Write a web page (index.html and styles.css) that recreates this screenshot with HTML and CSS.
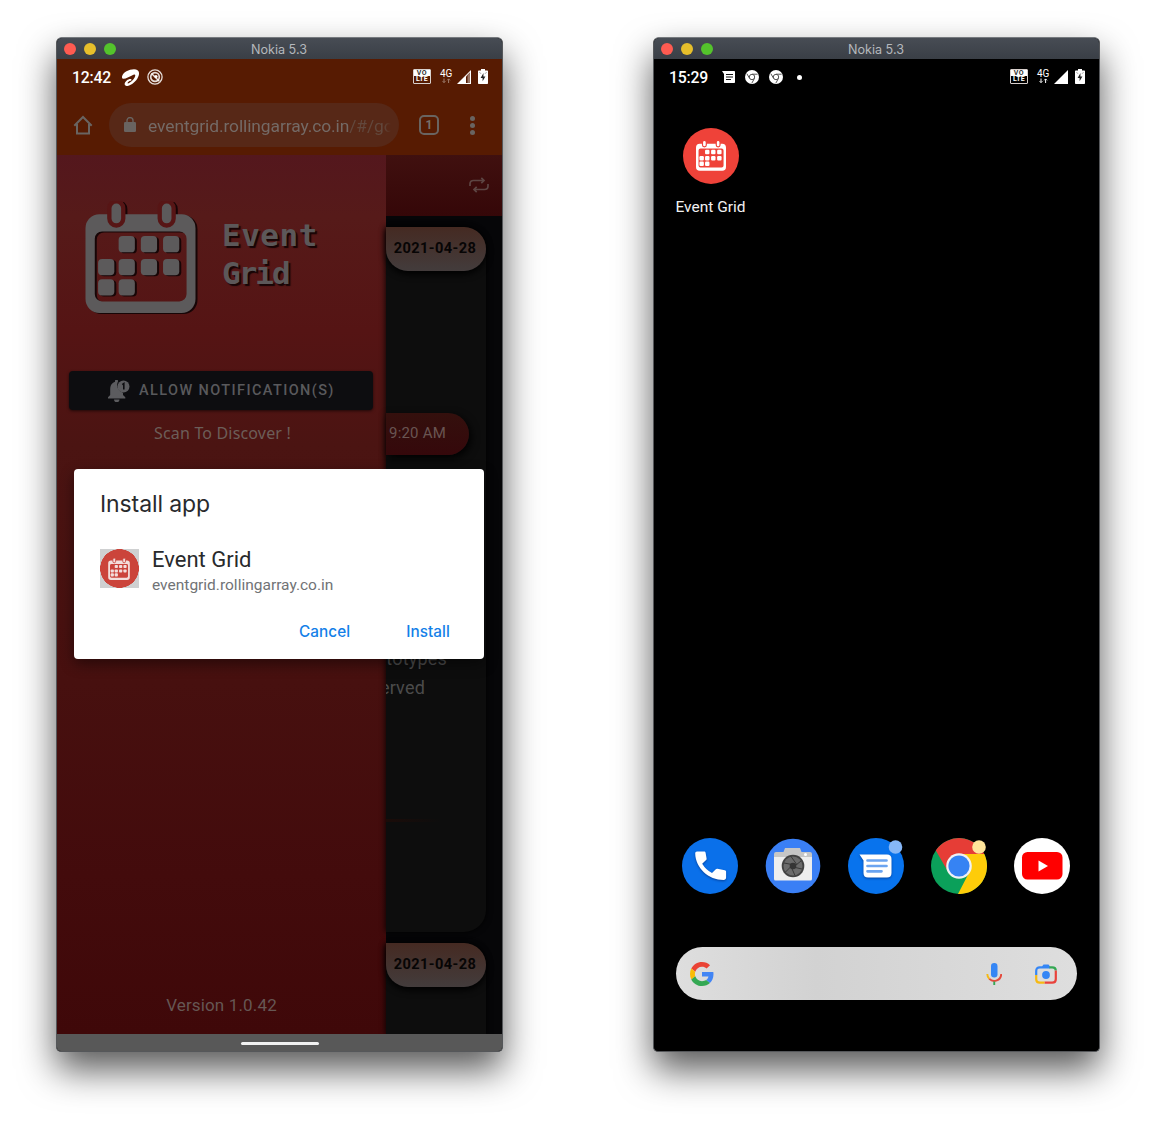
FILE: index.html
```html
<!DOCTYPE html>
<html lang="en">
<head>
<meta charset="utf-8">
<title>Event Grid on Nokia 5.3</title>
<link rel="stylesheet" href="styles.css">
</head>
<body>
<svg class="defs" width="0" height="0">
  <symbol id="calendar" viewBox="0 0 332 338">
    <path class="cal-fill" fill-rule="evenodd" d="M42 40H290A42 42 0 0 1 332 82V296A42 42 0 0 1 290 338H42A42 42 0 0 1 0 296V82A42 42 0 0 1 42 40ZM50 92A22 22 0 0 0 28 114V281A22 22 0 0 0 50 303H283A22 22 0 0 0 305 281V114A22 22 0 0 0 283 92Z"/>
    <g class="cal-ring"><rect x="72" y="1" width="42" height="73" rx="21"/><rect x="224" y="1" width="42" height="73" rx="21"/></g>
    <g class="cal-fill">
      <rect x="100" y="106" width="49" height="49" rx="12"/><rect x="167" y="106" width="49" height="49" rx="12"/><rect x="234" y="106" width="49" height="49" rx="12"/>
      <rect x="38" y="175" width="49" height="49" rx="12"/><rect x="100" y="175" width="49" height="49" rx="12"/><rect x="167" y="175" width="49" height="49" rx="12"/><rect x="234" y="175" width="49" height="49" rx="12"/>
      <rect x="38" y="236" width="49" height="49" rx="12"/><rect x="100" y="236" width="49" height="49" rx="12"/>
    </g>
  </symbol>
  <symbol id="arrows" viewBox="0 0 12 6">
    <path d="M4 .5v4M2.6 3.200 4 4.600l1.400-1.400M8.600 5V1M7.200 2.300l1.400-1.400L10 2.300" fill="none" stroke="currentColor"/>
  </symbol>
  <symbol id="battery" viewBox="0 0 10 15">
    <path d="M3 0h4v1.500h2.300c.4 0 .7.3.7.7v12c0 .5-.3.8-.7.8H.7c-.4 0-.7-.3-.7-.8v-12c0-.4.3-.7.7-.7H3Z" fill="#fff"/>
    <path d="M5.500 4 2.600 9h2v3.200L7.400 7.400h-2Z" fill="#222"/><path d="M1.500 3.200 3 4.800M8.500 3.200 7 4.800" stroke="#777" stroke-width=".7"/>
  </symbol>
  <symbol id="chrome-mono" viewBox="0 0 14 14">
    <circle cx="7" cy="7" r="7" fill="#fff"/><circle cx="7" cy="7" r="2.700" fill="none" stroke="#555" stroke-width="1"/>
    <path d="M7 4.200h5.600M4.600 8.400 1.800 3.600M9.500 8.300 6.800 13.200" stroke="#555" stroke-width="1"/>
  </symbol>
</svg>

<main class="desk">
  <section class="window">
    <header class="titlebar"><span class="light red"></span><span class="light amber"></span><span class="light green"></span><span class="title">Nokia 5.3</span></header>
    <div class="browser">
      <div class="statusbar">
        <span class="clock">12:42</span>
        <svg class="airtel" viewBox="0 0 17 17"><path d="M0 7.500C1 3.200 7 .3 12 .3c4.200 0 5.800 2.600 4.700 6.200-1.200 4.300-5.500 8.400-9.500 10.100-2.600 1-5 .2-4.500-2.100.5-2.400 3.400-4.800 5.900-4.600 1.300.1 1.100 1.700 0 1.900-1.700.3-2.800 1.300-3 2.200-.1.700.8.500 1.900-.2 3-1.700 5.200-4.500 5.700-6.700.4-2.100-1.200-1.700-3.200-.6C7.400 7.900 4 9.700 1.600 9.700.3 9.700-.2 8.700 0 7.500Z" fill="#fff"/></svg>
        <svg class="dnd" viewBox="0 0 16 16"><g fill="none" stroke="#fff" stroke-opacity=".85"><circle cx="8" cy="8" r="7.100" stroke-width="1.300"/><circle cx="8" cy="8" r="4.300" stroke-width="1.700"/><path d="m4.500 4.500 7.800 7.800" stroke-width="1.500"/></g><circle cx="9" cy="7.500" r="1.600" fill="#fff"/></svg>
        <span class="grow"></span>
        <span class="volte"><b>VO</b><b>LTE</b></span>
        <span class="lte dim"><span>4G</span><svg><use href="#arrows"/></svg></span>
        <svg class="signal" viewBox="0 0 14 14"><path d="M0 14 14 0V14Z" fill="#fff"/><path d="M9 6.500 13 2.500V13H9Z" fill="#571b02"/><path d="M10.500 5 13 2.500V13h-2.500Z" fill="#9a7768"/></svg>
        <svg class="battery"><use href="#battery"/></svg>
      </div>
      <div class="toolbar">
        <svg class="home" viewBox="0 0 20 20"><path d="M1.300 10.700 10 2l8.700 8.700M4 9v9.500h12V9" fill="none" stroke="#696461" stroke-width="2"/></svg>
        <div class="urlbox">
          <svg class="lock" viewBox="0 0 12 15"><rect y="5" width="12" height="10" rx="1.200" fill="#696461"/><path d="M3 6V3.600a3 3 0 0 1 6 0V6" fill="none" stroke="#696461" stroke-width="1.400"/></svg>
          <span class="url">eventgrid.rollingarray.co.in<span class="path">/#/go</span></span>
        </div>
        <span class="tabs">1</span>
        <span class="kebab"><i></i><i></i><i></i></span>
      </div>
    </div>
    <div class="page">
      <aside class="drawer">
        <div class="brand">
          <svg class="logo"><use href="#calendar"/></svg>
          <div class="brandname"><div>Event</div><div class="tight">Grid</div></div>
        </div>
        <div class="notify">
          <svg class="bell" viewBox="0 0 22 22"><path d="M0 18.500v-1.300l2.200-2.300V9.500C2.200 5 4.300 2.500 7 1.700V1a1.500 1.500 0 0 1 3 0v.5a8 8 0 0 0 5 11.200v2.200l2.300 2.300v1.300ZM6 19.500h5.500a2.700 2.700 0 0 1-5.500 0Z" fill="#5c5c5f"/><circle cx="15.500" cy="6.500" r="6" fill="#5c5c5f"/><path d="M14.300 4.600l1.500-1v5.800" fill="none" stroke="#0d0d10" stroke-width="1.600"/></svg>
          <span>ALLOW NOTIFICATION(S)</span>
        </div>
        <div class="scan">Scan To Discover !</div>
        <div class="version">Version 1.0.42</div>
      </aside>
      <div class="feed">
        <div class="feedhead">
          <svg class="repeat" viewBox="0 0 20 16"><path d="M1 9V7c0-2.300 1.200-3.500 3.500-3.500H15M12.300.8 15 3.500l-2.700 2.700M19 7v2c0 2.300-1.200 3.500-3.500 3.500H5M7.700 9.800 5 12.500l2.700 2.700" fill="none" stroke="#5d4543" stroke-width="1.700"/></svg>
        </div>
        <div class="entries">
          <article class="entry">
            <div class="date">2021-04-28</div>
            <div class="time">9:20 AM</div>
            <div class="word first">prototypes</div>
            <div class="word second">reserved</div>
            <div class="rule"></div>
          </article>
          <article class="entry next"><div class="date">2021-04-28</div></article>
        </div>
      </div>
    </div>
    <div class="navbar"><span></span></div>
    <div class="dialog">
      <h2>Install app</h2>
      <div class="app">
        <span class="appicon"><svg><use href="#calendar"/></svg></span>
        <div><div class="appname">Event Grid</div><div class="host">eventgrid.rollingarray.co.in</div></div>
      </div>
      <div class="actions"><span class="cancel">Cancel</span><span class="install">Install</span></div>
    </div>
  </section>

  <section class="window">
    <header class="titlebar"><span class="light red"></span><span class="light amber"></span><span class="light green"></span><span class="title">Nokia 5.3</span></header>
    <div class="launcher">
      <div class="statusbar">
        <span class="clock">15:29</span>
        <svg class="msg" viewBox="0 0 13 12"><path d="M0 0h12c.6 0 1 .4 1 1v10c0 .6-.4 1-1 1H3c-.6 0-1-.4-1-1V3Z" fill="#fff"/><path d="M4 3.500h7M4 6h7M4 8.500h5" stroke="#111" stroke-width="1.100"/></svg>
        <svg class="mono"><use href="#chrome-mono"/></svg>
        <svg class="mono"><use href="#chrome-mono"/></svg>
        <span class="more"></span>
        <span class="grow"></span>
        <span class="volte"><b>VO</b><b>LTE</b></span>
        <span class="lte"><span>4G</span><svg><use href="#arrows"/></svg></span>
        <svg class="signal" viewBox="0 0 14 14"><path d="M0 14 14 0V14Z" fill="#fff"/></svg>
        <svg class="battery"><use href="#battery"/></svg>
      </div>
      <div class="shortcut">
        <span class="disc"><svg><use href="#calendar"/></svg></span>
        <span class="label">Event Grid</span>
      </div>
      <div class="dock">
        <svg viewBox="0 0 56 56"><circle cx="28" cy="28" r="28" fill="#0a70ea"/><path class="lift" d="M15 13.500h7c1 0 1.400.5 1.600 1.300l1 5.600c.1.700 0 1.200-.5 1.700l-3.900 3.700a25 25 0 0 0 9.800 9.300l3.800-3.800c.5-.5 1-.7 1.700-.5l7.300 1.500c.9.200 1.300.7 1.300 1.500v5.800c0 1.500-1 2.400-2.500 2.400C26.500 42 13.500 30 13.200 15.500c0-1.200.7-2 1.800-2Z" fill="#fff"/></svg>
        <svg viewBox="0 0 56 56"><circle cx="28" cy="28" r="27.300" fill="#3a7ff5"/><path d="M18.500 14l1.500-4h15l1.500 4h8.500a2 2 0 0 1 2 2v4H9v-4a2 2 0 0 1 2-2Z" fill="#c6c6c6"/><path d="M9 19h38v22a1.500 1.500 0 0 1-1.500 1.500h-35A1.500 1.500 0 0 1 9 41Z" fill="#eee"/><circle cx="40.500" cy="16.500" r="1.500" fill="#fff"/><circle cx="28" cy="28" r="11.300" fill="#424242"/><circle cx="28" cy="28" r="9.500" fill="#6b6b6b"/><path d="m26 18.500 5.800 8M36 23l-7.500 6M37 31l-9-2M30 37.500l-4-9M20.500 34l6-6M19 25l8 1.500" stroke="#393939" stroke-width="1"/><circle cx="28" cy="28" r="3.300" fill="#353535"/></svg>
        <svg viewBox="0 0 56 56"><circle cx="28" cy="28" r="28" fill="#0873ed"/><path class="lift" d="M11.500 16.500H39c3 0 4.500 1.700 4.500 4.500v14c0 3-1.600 4.500-4.500 4.500H20c-3 0-4.500-1.500-4.500-4.500V22.500Z" fill="#fff"/><path d="M19.500 22.500H38.500M19.500 28H38.500M19.500 33.300H33.500" stroke="#6ba4f0" stroke-width="2.700" stroke-linecap="round"/><circle cx="47.500" cy="9" r="6.800" fill="#86b7f7"/></svg>
        <svg viewBox="0 0 56 56"><circle cx="28" cy="28" r="28" fill="#0ba05a"/><path d="M4.800 12.500A28 28 0 0 1 53.300 16H28V28L17.200 34Z" fill="#e63d36"/><path d="M28 16H53.300A28 28 0 0 1 27 56L38.400 34Z" fill="#fecc09"/><circle cx="28" cy="28" r="12.800" fill="#f0f1f4"/><circle cx="28" cy="28" r="10.600" fill="#3683f3"/><circle cx="48" cy="9" r="6.800" fill="#ffe49a"/></svg>
        <svg viewBox="0 0 56 56"><circle cx="28" cy="28" r="28" fill="#fff"/><rect x="8" y="14" width="40.500" height="27.500" rx="5.500" fill="#f00"/><path d="m24.500 22.500 9.500 5.500-9.500 5.500Z" fill="#fff"/></svg>
      </div>
      <div class="search">
        <svg class="g" viewBox="0 0 48 48"><path fill="#EA4335" d="M24 9.500c3.540 0 6.710 1.220 9.210 3.600l6.850-6.850C35.900 2.380 30.470 0 24 0 14.620 0 6.510 5.380 2.560 13.220l7.980 6.190C12.430 13.720 17.740 9.500 24 9.500z"/><path fill="#4285F4" d="M46.980 24.550c0-1.570-.15-3.090-.38-4.550H24v9.020h12.940c-.58 2.960-2.260 5.480-4.780 7.180l7.730 6c4.510-4.180 7.090-10.360 7.090-17.650z"/><path fill="#FBBC05" d="M10.530 28.590c-.48-1.450-.76-2.990-.76-4.590s.27-3.140.76-4.590l-7.980-6.190C.92 16.460 0 20.120 0 24c0 3.880.92 7.540 2.560 10.780l7.970-6.190z"/><path fill="#34A853" d="M24 48c6.480 0 11.930-2.130 15.890-5.810l-7.730-6c-2.150 1.450-4.920 2.300-8.160 2.300-6.260 0-11.570-4.220-13.470-9.910l-7.980 6.190C6.510 42.620 14.620 48 24 48z"/></svg>
        <span class="grow"></span>
        <svg class="mic" viewBox="0 0 16 22"><rect x="5" width="6.500" height="14.500" rx="3.200" fill="#3586f5"/><g fill="none" stroke-width="1.900"><path d="M1.300 11a7 7 0 0 0 2 4.900" stroke="#f5b914"/><path d="M3.300 15.900A7 7 0 0 0 15.200 11" stroke="#e44a3d"/><path d="M8.250 18.500V22" stroke="#34a853"/></g></svg>
        <svg class="lens" viewBox="0 0 22 20"><path d="M7 2.500 8.500.500h5L15 2.500v1H7Z" fill="#3586f5"/><g fill="none" stroke-width="2.200"><path d="M1.200 11V7c0-2.300 1.300-3.700 3.600-3.700H15" stroke="#3586f5"/><path d="M14.500 3.300h2.700c2.300 0 3.600 1.400 3.600 3.200" stroke="#34a853"/><path d="M20.800 6.500v8.700c0 2.300-1.300 3.500-3.600 3.500H9.500" stroke="#e9423b"/><path d="M1.200 11v4.200c0 2.300 1.300 3.500 3.600 3.500h4.700" stroke="#f6b913"/></g><circle cx="11" cy="11" r="3.900" fill="#3586f5"/></svg>
      </div>
    </div>
  </section>
</main>
</body>
</html>
```
FILE: styles.css
```css
* { box-sizing: border-box; }
body { margin: 0; background: #fff; font-family: Roboto, sans-serif; }
svg { display: block; flex: none; }
.defs { position: absolute; }
.grow { flex: 1; }

.desk { display: flex; gap: 150px; width: 1156px; height: 1125px; padding: 37px 56px; align-items: flex-start; overflow: hidden; }
.window { position: relative; display: flex; flex-direction: column; flex: none; width: 447px; height: 1015px; border: 1px solid #55575a; border-top-color: #767a7e; border-radius: 6px 6px 5px 5px; background: #000; box-shadow: 0 18px 36px rgba(0, 0, 0, .65); }

.titlebar { display: flex; align-items: center; gap: 8px; height: 21px; padding-left: 7px; border-radius: 5px 5px 0 0; background: linear-gradient(#474c54, #3a3f46); flex: none; }
.light { width: 12px; height: 12px; border-radius: 50%; }
.red { background: #fe5b51; }
.amber { background: #e6bf2b; }
.green { background: #54c32c; }
.title { flex: 1; padding: 1px 68px 0 0; text-align: center; font: 12.6px/21px Inter, sans-serif; letter-spacing: 0; color: #b5b8bc; }

.statusbar { display: flex; align-items: center; height: 36px; padding: 0 14px 0 15px; color: #fff; flex: none; }
.clock { width: 50px; font-size: 15.8px; font-weight: 500; letter-spacing: -.2px; }
.airtel { width: 17px; height: 17px; }
.dnd { width: 16px; height: 16px; margin-left: 8px; }
.volte { display: flex; flex-direction: column; width: 18px; height: 15px; margin-top: -1px; border: 1px solid #d8d0cd; border-radius: 1px; text-align: center; font-size: 7px; line-height: 7px; flex: none; }
.volte b:first-child { height: 6px; line-height: 6px; background: #fff; color: #333; letter-spacing: .5px; }
.volte b:last-child { letter-spacing: .3px; }
.lte { display: flex; flex-direction: column; align-items: center; width: 12px; height: 15px; margin: -1px 0 0 9px; font-size: 10px; line-height: 9px; letter-spacing: -.3px; flex: none; }
.lte svg { width: 12px; height: 6px; }
.lte.dim svg { color: #a08070; }
.signal { width: 14px; height: 14px; margin-left: 5px; }
.battery { width: 10px; height: 15px; margin: -1px 0 0 7px; }

.browser { height: 96px; background: #571b02; flex: none; }
.toolbar { display: flex; align-items: center; height: 60px; }
.home { width: 20px; height: 20px; margin-left: 16px; }
.urlbox { display: flex; align-items: center; width: 290px; height: 44px; margin-left: 16px; padding: 0 8px 0 15px; border-radius: 22px; background: #572817; }
.lock { width: 12px; height: 15px; margin-bottom: 2px; }
.url { width: 243px; margin-left: 12px; padding-top: 1px; overflow: hidden; white-space: nowrap; font-size: 17.4px; letter-spacing: -.08px; color: #746a66; -webkit-mask-image: linear-gradient(90deg, #000 97%, transparent); mask-image: linear-gradient(90deg, #000 97%, transparent); }
.path { color: #62483d; }
.tabs { width: 20px; height: 20px; margin-left: 20px; border: 2px solid #696461; border-radius: 5px; text-align: center; font-size: 12px; line-height: 16px; font-weight: 700; color: #77706c; }
.kebab { display: flex; flex-direction: column; gap: 2px; margin-left: 31px; }
.kebab i { width: 5px; height: 5px; border-radius: 50%; background: #696461; }

.page { display: flex; height: 879px; overflow: hidden; flex: none; }
.drawer { display: flex; flex-direction: column; width: 329px; background: linear-gradient(#54171d, #561a19 7%, #551414 20%, #4b1412 33%, #47100f 60%, #430b0c 82%, #3f0809); flex: none; }
.brand { display: flex; height: 216px; padding: 46px 0 0 28px; }
.cal-fill { fill: var(--ink); }
.cal-ring { fill: var(--ink); stroke: var(--paper); stroke-width: 13px; }
.logo { --ink: #5c5a5b; --paper: #571515; width: 111px; height: 112px; overflow: visible; filter: drop-shadow(2px 1.5px .5px #170506); }
.brandname { margin: 15px 0 0 26px; font: bold 31px/38px "DejaVu Sans Mono", monospace; letter-spacing: .5px; color: #5c5859; text-shadow: 2px 2px 1px #170506; }
.tight { letter-spacing: -2px; }
.notify { display: flex; align-items: center; gap: 9px; width: 304px; height: 39px; margin-left: 12px; padding-left: 39px; border-radius: 4px; background: #0d0d10; box-shadow: 0 1px 3px rgba(0, 0, 0, .6); font-size: 14.5px; font-weight: 500; letter-spacing: 1.4px; white-space: nowrap; color: #59595c; }
.bell { width: 22px; height: 22px; }
.scan { margin-top: 12px; padding-left: 2px; text-align: center; font: 16px/22px "Noto Sans", sans-serif; letter-spacing: .17px; color: #6c5e59; }
.version { margin-top: auto; height: 40px; text-align: center; font-size: 17px; line-height: 22px; letter-spacing: .15px; color: #665754; }

.feed { display: flex; flex-direction: column; width: 116px; background: #060608; }
.feedhead { height: 61px; padding: 22px 0 0 83px; background: linear-gradient(#40100f, #350708); flex: none; }
.repeat { width: 20px; height: 16px; }
.entries { display: flex; flex-direction: column; gap: 11px; padding-top: 11px; width: 100px; }
.entry { height: 705px; border-radius: 0 22px 22px 0; background: #0d0d0d; box-shadow: 0 0 6px #000; flex: none; }
.next { height: 92px; border-bottom-right-radius: 0; }
.date { height: 44px; padding-right: 2px; border-radius: 0 22px 22px 22px; background: linear-gradient(#452a22, #433c3c); box-shadow: 0 3px 7px #000; text-align: center; font-size: 14.6px; line-height: 42px; font-weight: 700; letter-spacing: .4px; color: #070505; }
.time { width: 83px; height: 42px; margin-top: 142px; padding-left: 3px; border-radius: 0 21px 21px 0; background: linear-gradient(#34100d, #35080b); box-shadow: 2px 3px 8px #000; font-size: 15px; line-height: 41px; letter-spacing: .2px; color: #695552; }
.word { display: flex; justify-content: flex-end; overflow: hidden; height: 29px; font-size: 18px; line-height: 29px; color: #4b4b4b; letter-spacing: .2px; }
.first { width: 61px; margin-top: 189px; }
.second { width: 39px; }
.rule { width: 55px; height: 3px; margin-top: 117px; background: linear-gradient(90deg, #1b0c09, #0d0d0d); }
.navbar { display: flex; align-items: center; justify-content: center; height: 17px; padding-top: 1px; background: #585858; border-radius: 0 0 4px 4px; flex: none; }
.navbar span { width: 78px; height: 3px; border-radius: 2px; background: #f2f2f2; }

.dialog { position: absolute; left: 17px; top: 431px; width: 410px; height: 190px; padding: 20px 26px 0; border-radius: 4px; background: #fff; box-shadow: 0 5px 14px rgba(0, 0, 0, .45); }
.dialog h2 { margin: 0; font: 400 23px/30px Inter, sans-serif; letter-spacing: -.1px; color: #292a2d; }
.app { display: flex; gap: 13px; height: 50px; margin-top: 27px; }
.appicon { display: flex; align-items: center; justify-content: center; width: 39px; height: 39px; margin-top: 3px; padding-right: 1px; background: radial-gradient(circle closest-side, #cb443b 98%, #cfd0d1 100%); }
.appicon svg { width: 22px; height: 22px; --ink: #f3dedb; --paper: #cb443b; }
.appname { font-size: 22px; line-height: 27px; color: #292a2c; }
.host { font-size: 15.5px; line-height: 24px; color: #717376; }
.actions { display: flex; justify-content: flex-end; margin-top: 25px; padding-right: 8px; gap: 56px; font: 500 15.3px/22px Inter, sans-serif; letter-spacing: .08px; color: #147fe8; }

.launcher { display: flex; flex-direction: column; height: 992px; }
.shortcut { display: flex; flex-direction: column; align-items: center; width: 113px; margin-top: 33px; }
.disc { display: flex; align-items: center; justify-content: center; width: 56px; height: 56px; padding-bottom: 2px; border-radius: 50%; background: #ef4239; }
.disc svg { width: 30px; height: 31px; --ink: #fff; --paper: #ef4239; }
.label { margin-top: 13px; font-size: 15.5px; line-height: 20px; color: #f1f1f1; white-space: nowrap; }
.dock { display: flex; gap: 27px; margin: 621px 0 0 28.4px; }
.dock svg { width: 56px; height: 56px; }
.lift { filter: drop-shadow(0 1px 1px rgba(0, 20, 80, .5)); }
.search { display: flex; align-items: center; width: 401px; height: 53px; margin: 53px 0 0 22px; padding: 0 20px 0 14px; border-radius: 27px; background: linear-gradient(90deg, #dedede, #d2d2d2 35%, #dedede); }
.g { width: 24px; height: 24px; }
.mic { width: 16px; height: 22px; }
.lens { width: 22px; height: 20px; margin-left: 33px; }
.msg { width: 13px; height: 12px; margin-left: 3px; }
.mono { width: 14px; height: 14px; margin-left: 10px; }
.more { width: 5px; height: 5px; margin-left: 14px; border-radius: 50%; background: #fff; }
```
